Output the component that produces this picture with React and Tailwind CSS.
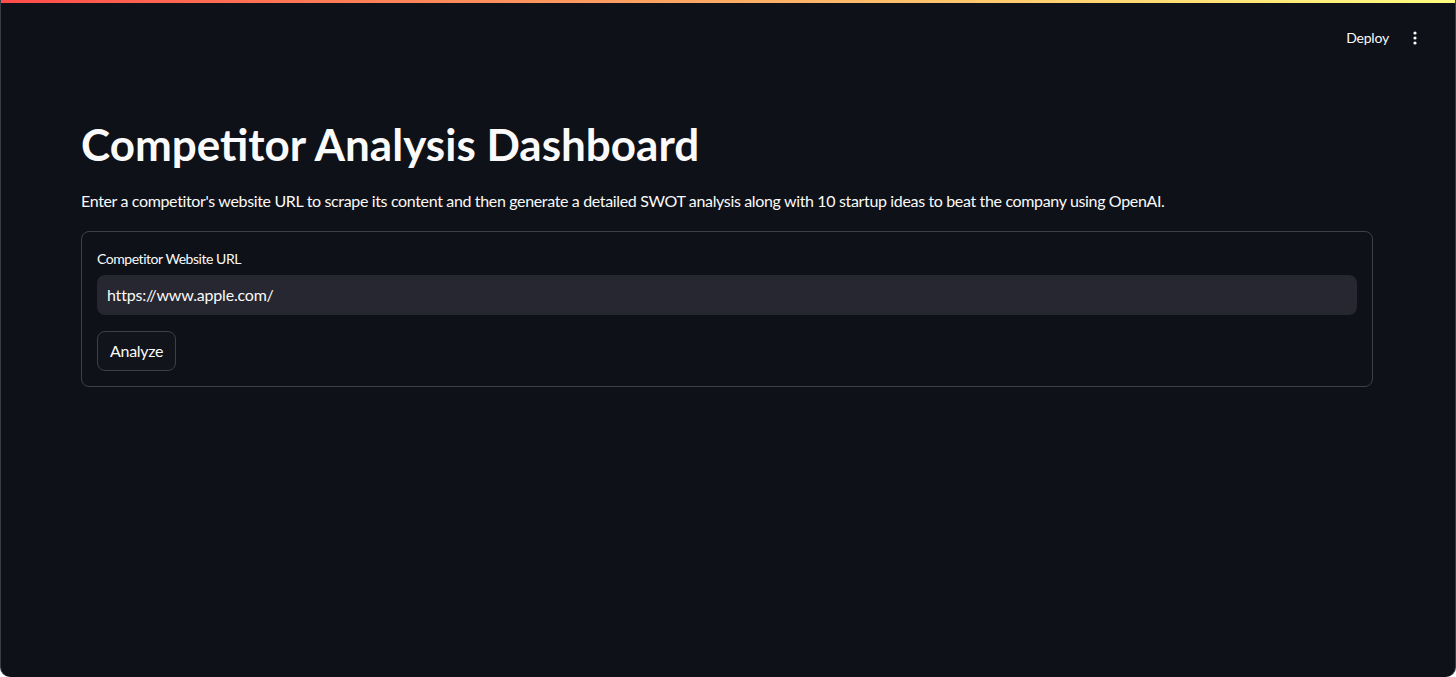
import React from 'react';

const font = { fontFamily: 'Lato, "Noto Sans", sans-serif' };

const App = () => {
  return (
    <div
      className="min-h-[677px] h-[677px] bg-[#0e1117] text-[#fafafa] flex flex-col border-l border-r border-[#3a3d45] rounded-b-[10px] overflow-hidden"
      style={font}
    >
      {/* decoration bar */}
      <div className="h-[3px] bg-gradient-to-r from-[#ff4b4b] to-[#fffd80] shrink-0" />

      {/* header */}
      <header className="h-[57px] flex items-center justify-end pr-[32px] gap-[18px] shrink-0">
        <span className="text-[14px] pt-[12px] tracking-[-0.2px]">Deploy</span>
        <svg width="16" height="16" viewBox="0 0 16 16" className="mt-[12px]">
          <circle cx="8" cy="3" r="1.6" fill="#fafafa" />
          <circle cx="8" cy="8" r="1.6" fill="#fafafa" />
          <circle cx="8" cy="13" r="1.6" fill="#fafafa" />
        </svg>
      </header>

      <main className="pl-[80px] pr-[82px] pt-[58px] flex flex-col">
        <h1 className="text-[44px] font-bold leading-[1.2]">
          Competitor Analysis Dashboard
        </h1>
        <p className="text-[16px] mt-[18px] tracking-[-0.35px]">
          Enter a competitor's website URL to scrape its content and then generate a detailed SWOT analysis along with 10 startup ideas to beat the company using OpenAI.
        </p>

        <div className="mt-[18px] border border-[#3d4047] rounded-[8px] px-[15px] pt-[18px] pb-[15px] flex flex-col">
          <label className="text-[14px] leading-[18px] tracking-[-0.45px]">Competitor Website URL</label>
          <div className="mt-[7px] h-[40px] bg-[#262730] rounded-[8px] flex items-center px-[10px] text-[16px] tracking-[-0.2px]">
            https://www.apple.com/
          </div>
          <div className="mt-[16px]">
            <button className="h-[40px] px-[12px] border border-[#3d4047] rounded-[8px] bg-[#11141a] text-[16px] text-[#fafafa] tracking-[-0.3px]">
              Analyze
            </button>
          </div>
        </div>
      </main>
    </div>
  );
};

export default App;
